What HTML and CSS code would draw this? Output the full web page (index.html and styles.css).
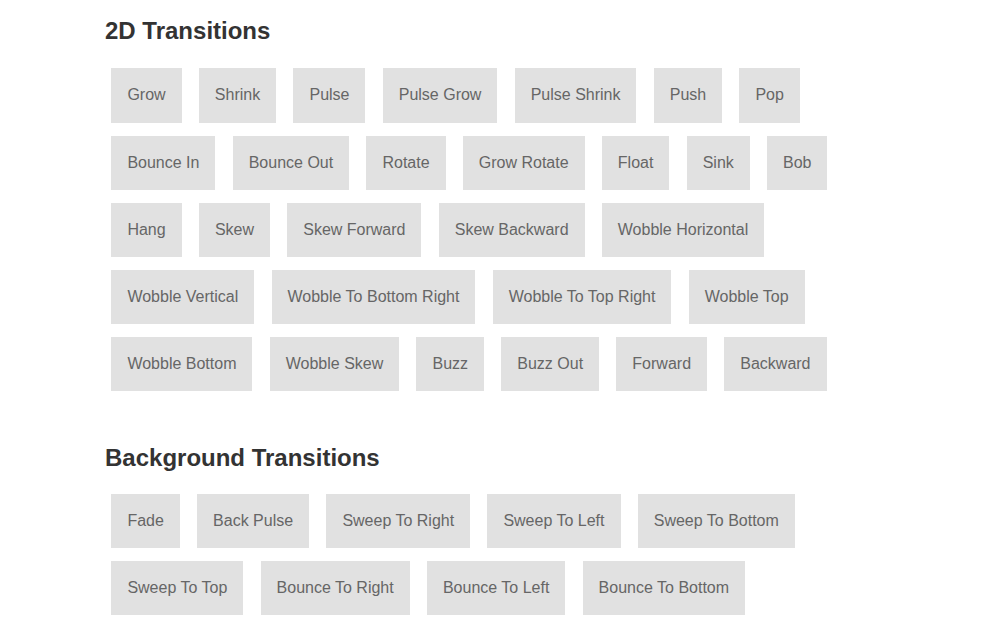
FILE: index.html
```html
<!DOCTYPE html>
<html>
<head>
<meta charset="utf-8">
<link rel="stylesheet" href="styles.css">
</head>
<body>
<div class="container">
  <section class="group first">
    <h2 class="title">2D Transitions</h2>
    <div class="buttons">
      <a class="button">Grow</a>
      <a class="button">Shrink</a>
      <a class="button">Pulse</a>
      <a class="button">Pulse Grow</a>
      <a class="button">Pulse Shrink</a>
      <a class="button">Push</a>
      <a class="button">Pop</a>
      <a class="button">Bounce In</a>
      <a class="button">Bounce Out</a>
      <a class="button">Rotate</a>
      <a class="button">Grow Rotate</a>
      <a class="button">Float</a>
      <a class="button">Sink</a>
      <a class="button">Bob</a>
      <a class="button">Hang</a>
      <a class="button">Skew</a>
      <a class="button">Skew Forward</a>
      <a class="button">Skew Backward</a>
      <a class="button">Wobble Horizontal</a>
      <a class="button">Wobble Vertical</a>
      <a class="button">Wobble To Bottom Right</a>
      <a class="button">Wobble To Top Right</a>
      <a class="button">Wobble Top</a>
      <a class="button">Wobble Bottom</a>
      <a class="button">Wobble Skew</a>
      <a class="button">Buzz</a>
      <a class="button">Buzz Out</a>
      <a class="button">Forward</a>
      <a class="button">Backward</a>
    </div>
  </section>
  <section class="group second">
    <h2 class="title">Background Transitions</h2>
    <div class="buttons">
      <a class="button">Fade</a>
      <a class="button">Back Pulse</a>
      <a class="button">Sweep To Right</a>
      <a class="button">Sweep To Left</a>
      <a class="button">Sweep To Bottom</a>
      <a class="button">Sweep To Top</a>
      <a class="button">Bounce To Right</a>
      <a class="button">Bounce To Left</a>
      <a class="button">Bounce To Bottom</a>
    </div>
  </section>
</div>
</body>
</html>
```

FILE: styles.css
```css
html, body {
  margin: 0;
  padding: 0;
  background: #fff;
}
body {
  font-family: "Liberation Sans", Arial, sans-serif;
  font-size: 16px;
  line-height: 1.4;
  color: #333;
}
.container {
  width: 798px;
  margin: 0 auto;
}
.group.first {
  padding-top: 17px;
}
.group.second {
  margin-top: 46.5px;
}
.title {
  margin: 0 0 17px;
  font-size: 24px;
  line-height: 28px;
  font-weight: bold;
  color: #333;
}
.second .title {
  margin-bottom: 15px;
}
.buttons {
  line-height: 1.4;
}
.button {
  display: inline-block;
  margin: 0.4em;
  padding: 1em;
  background: #e1e1e1;
  color: #666;
  text-decoration: none;
  cursor: pointer;
}
```
